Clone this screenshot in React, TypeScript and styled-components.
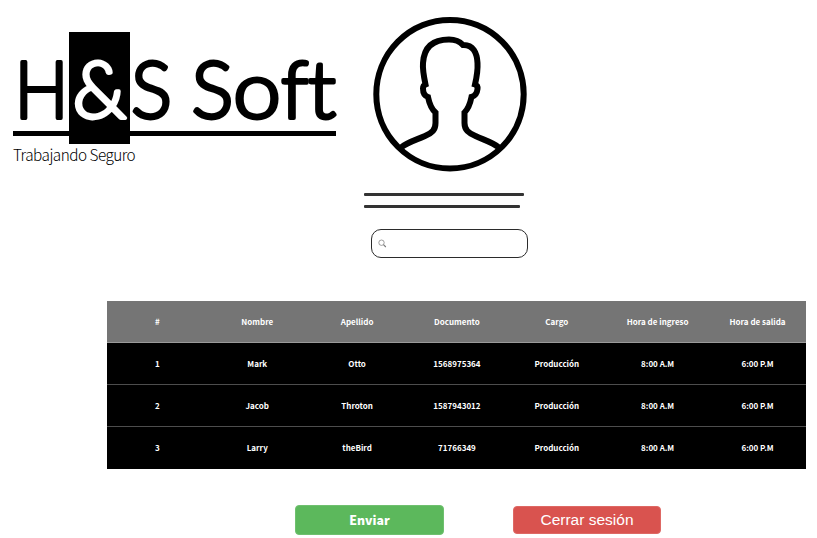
import React from "react";
import styled, { createGlobalStyle } from "styled-components";

const GlobalStyle = createGlobalStyle`
  * { box-sizing: border-box; }
  body { margin: 0; background: #fff; }
`;

const sans = `"Noto Sans CJK SC", "Noto Sans CJK JP", sans-serif`;

const Page = styled.main`
  width: 817px;
  height: 538px;
  overflow: hidden;
  font-family: ${sans};
  color: #000;
`;

const Header = styled.header`
  display: flex;
  height: 301px;
`;

const Brand = styled.div`
  width: 364px;
  padding: 32px 0 0 13px;
`;

const Logo = styled.svg`
  display: block;
  overflow: visible;
`;

const Tagline = styled.p`
  margin: 0;
  font-size: 15.3px;
  line-height: 20px;
  font-weight: 300;
  letter-spacing: -0.5px;
  color: #000;
  white-space: nowrap;
`;

const Profile = styled.div`
  display: flex;
  flex-direction: column;
  align-items: flex-start;
  padding-top: 16px;
`;

const Avatar = styled.svg`
  display: block;
  margin: 0 0 21px 8px;
`;

const Rule = styled.div<{ $width: number }>`
  width: ${(p) => p.$width}px;
  height: 3px;
  margin-bottom: 9px;
  border-radius: 1px;
  background: #333;
`;

const Search = styled.label`
  display: flex;
  align-items: center;
  width: 157px;
  height: 29px;
  margin: 12px 0 0 7px;
  padding-left: 6px;
  border: 1px solid #2b2b2b;
  border-radius: 10px;
`;

const SearchInput = styled.input`
  width: 130px;
  border: 0;
  outline: 0;
  background: transparent;
  font: 12px ${sans};
`;

const Table = styled.table`
  width: 699px;
  margin-left: 107px;
  border-collapse: separate;
  border-spacing: 0;
  table-layout: fixed;
  background: #000;
  color: #fff;
  font-size: 8px;
  font-weight: 700;
`;

const Row = styled.tr<{ $head?: boolean; $line: string }>`
  height: 42px;
  background: ${(p) => (p.$head ? "#757575" : "#000")};
  & > * {
    padding: 1px 0 0 1px;
    text-align: center;
    vertical-align: middle;
    line-height: 14px;
    border-bottom: 1px solid ${(p) => p.$line};
  }
  & > :nth-child(n + 6) {
    padding-left: 3px;
  }
`;

const Actions = styled.div`
  display: flex;
  align-items: center;
  gap: 69px;
  margin: 36px 0 0 295px;
`;

const Button = styled.button<{ $tone: "go" | "leave" }>`
  width: ${(p) => (p.$tone === "go" ? 149 : 148)}px;
  height: ${(p) => (p.$tone === "go" ? 30 : 28)}px;
  padding: 0;
  border: 1px solid ${(p) => (p.$tone === "go" ? "#6fc06f" : "#de6864")};
  border-radius: 4px;
  background: ${(p) => (p.$tone === "go" ? "#5cb85c" : "#d9534f")};
  color: #fff;
  font-family: ${(p) => (p.$tone === "go" ? sans : `"Liberation Sans", Arial, sans-serif`)};
  font-size: ${(p) => (p.$tone === "go" ? 12.3 : 15.5)}px;
  font-weight: ${(p) => (p.$tone === "go" ? 900 : 400)};
  line-height: 20px;
`;

const columns = ["#", "Nombre", "Apellido", "Documento", "Cargo", "Hora de ingreso", "Hora de salida"];
const rows = [
  ["1", "Mark", "Otto", "1568975364", "Producción", "8:00 A.M", "6:00 P.M"],
  ["2", "Jacob", "Throton", "1587943012", "Producción", "8:00 A.M", "6:00 P.M"],
  ["3", "Larry", "theBird", "71766349", "Producción", "8:00 A.M", "6:00 P.M"],
];

const LogoText = styled.text<{ $light?: boolean }>`
  font-family: Lato, sans-serif;
  font-size: 79.5px;
  font-weight: 300;
  fill: ${(p) => (p.$light ? "#fff" : "#000")};
  stroke: ${(p) => (p.$light ? "#fff" : "#000")};
  stroke-width: 3.8;
  stroke-linejoin: round;
`;

const letters = [
  { glyph: "H", x: 1.4, width: 54 },
  { glyph: "&", x: 59.5, width: 54, light: true },
  { glyph: "S", x: 118, width: 41 },
  { glyph: "S", x: 178.5, width: 42 },
  { glyph: "o", x: 220, width: 48 },
  { glyph: "f", x: 268, width: 27.5 },
  { glyph: "t", x: 295, width: 28 },
];

export default function App() {
  return (
    <>
      <GlobalStyle />
      <Page>
        <Header>
          <Brand>
            <Logo width="323" height="112" viewBox="0 0 323 112">
              <rect x="0" y="99" width="323" height="5" />
              <rect x="56" y="0" width="61" height="112" />
              {letters.map((l) => (
                <LogoText key={l.x} x={l.x} y="85.6" textLength={l.width} lengthAdjust="spacingAndGlyphs" $light={l.light}>
                  {l.glyph}
                </LogoText>
              ))}
            </Logo>
            <Tagline>Trabajando Seguro</Tagline>
          </Brand>
          <Profile>
            <Avatar width="156" height="156" viewBox="0 0 156 156" fill="none" stroke="#000" strokeWidth="6">
              <ellipse cx="78" cy="78.2" rx="73.7" ry="74.3" />
              <path d="M29 131.5C36 126 44 124 53 120C60 117 63.5 114 63.5 107V96.5C59.5 93 57.5 88.5 56 81C53 80 51 77 51 72.5Q51 69.5 53.5 68.5C51.5 59 50.5 53 51 47C52 31 61 23.5 77 23.5C83 23.5 87 24.5 91 29C101 28.5 105 37 105.5 47C106 55 104.5 62 103 68.5Q106 69.5 105.5 73C105 77.5 103 80 99.5 81C98 88.5 96 93 92.5 96.5V107C92.5 114 96.5 117 103.5 120C112 124 120 126 127 131.5" />
            </Avatar>
            <Rule $width={160} />
            <Rule $width={156} />
            <Search>
              <svg width="9" height="9" viewBox="0 0 9 9" fill="none" stroke="#777" strokeWidth=".7">
                <circle cx="3.5" cy="3.7" r="2.7" />
                <path d="M5.5 5.7L7.8 8" strokeWidth="1.1" />
              </svg>
              <SearchInput aria-label="Buscar" />
            </Search>
          </Profile>
        </Header>
        <Table>
          <thead>
            <Row $head $line="#9a9a9a">
              {columns.map((c) => <th key={c}>{c}</th>)}
            </Row>
          </thead>
          <tbody>
            {rows.map((r, i) => (
              <Row key={r[0]} $line={i < rows.length - 1 ? "#4d4d4d" : "#000"}>
                {r.map((c, j) => <td key={j}>{c}</td>)}
              </Row>
            ))}
          </tbody>
        </Table>
        <Actions>
          <Button $tone="go">Enviar</Button>
          <Button $tone="leave">Cerrar sesión</Button>
        </Actions>
      </Page>
    </>
  );
}
